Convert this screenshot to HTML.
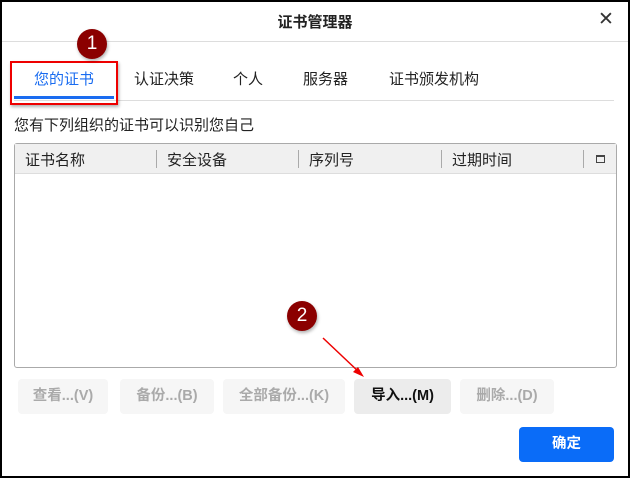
<!DOCTYPE html><html><head><meta charset="utf-8"><style>
*{margin:0;padding:0;box-sizing:border-box}
body{width:630px;height:478px;background:#000;font-family:"Liberation Sans","Noto Sans CJK SC",sans-serif;position:relative;overflow:hidden}
.win{position:absolute;left:2px;top:2px;width:626px;height:474px;background:#fff}
.a{position:absolute}
.t{font-size:15px;color:#222;white-space:nowrap}
.btn{position:absolute;top:379px;height:35px;border-radius:4px;background:#f6f6f6;color:#aaa;font-size:14.5px;font-weight:bold;text-align:center;line-height:34px}
.badge{position:absolute;width:30px;height:30px;border-radius:50%;background:#8b0000;color:#fff;font-size:19px;text-align:center;line-height:30px;box-shadow:1px 2px 3px rgba(0,0,0,.3)}
</style></head><body><div class="win"></div>
<div class="a t" style="left:0;width:630px;top:11px;text-align:center;font-weight:bold;font-size:15px">证书管理器</div>
<div class="a t" style="left:598px;top:8px;font-size:19px;color:#333;font-weight:300">✕</div>
<div class="a" style="left:2px;top:41px;width:626px;height:1px;background:#ddd"></div>
<div class="a" style="left:14px;top:100px;width:600px;height:1px;background:#ddd"></div>
<div class="a t" style="left:34px;top:68px;color:#1a6cf0">您的证书</div>
<div class="a" style="left:14px;top:96px;width:100px;height:3px;background:#1a6cf0"></div>
<div class="a" style="left:10px;top:61px;width:108px;height:44px;border:2px solid #e00;box-shadow:1px 2px 3px rgba(0,0,0,.3)"></div>
<div class="a t" style="left:134px;top:68px">认证决策</div>
<div class="a t" style="left:233px;top:68px">个人</div>
<div class="a t" style="left:303px;top:68px">服务器</div>
<div class="a t" style="left:389px;top:68px">证书颁发机构</div>
<div class="badge" style="left:77px;top:29px">1</div>
<div class="a t" style="left:14px;top:114px">您有下列组织的证书可以识别您自己</div>
<div class="a" style="left:14px;top:143px;width:603px;height:225px;border:1px solid #aaa;border-radius:3px"></div>
<div class="a" style="left:15px;top:144px;width:601px;height:30px;background:#f0f0f0;border-bottom:1px solid #ddd"></div>
<div class="a t" style="left:25px;top:149px">证书名称</div>
<div class="a t" style="left:167px;top:149px">安全设备</div>
<div class="a t" style="left:309px;top:149px">序列号</div>
<div class="a t" style="left:452px;top:149px">过期时间</div>
<div class="a" style="left:156px;top:150px;width:1px;height:18px;background:#aaa"></div>
<div class="a" style="left:298px;top:150px;width:1px;height:18px;background:#aaa"></div>
<div class="a" style="left:441px;top:150px;width:1px;height:18px;background:#aaa"></div>
<div class="a" style="left:583px;top:150px;width:1px;height:18px;background:#aaa"></div>
<div class="a" style="left:596px;top:155px;width:9px;height:8px;border:1px solid #444;border-top-width:2px"></div>
<div class="btn" style="left:18px;width:90px">查看...(V)</div>
<div class="btn" style="left:120px;width:94px">备份...(B)</div>
<div class="btn" style="left:223px;width:122px">全部备份...(K)</div>
<div class="btn" style="left:354px;width:97px;background:#ececec;color:#111">导入...(M)</div>
<div class="btn" style="left:460px;width:94px">删除...(D)</div>
<div class="a" style="left:519px;top:427px;width:95px;height:35px;border-radius:4px;background:#0a6cf8;color:#fff;font-weight:bold;font-size:14.5px;text-align:center;line-height:34px">确定</div>
<div class="badge" style="left:287px;top:301px">2</div>
<svg class="a" style="left:0;top:0" width="630" height="478"><line x1="323" y1="338" x2="360" y2="373" stroke="#e00" stroke-width="1.5"/><polygon points="364,377 353,372 358,367" fill="#e00"/></svg>
</body></html>
